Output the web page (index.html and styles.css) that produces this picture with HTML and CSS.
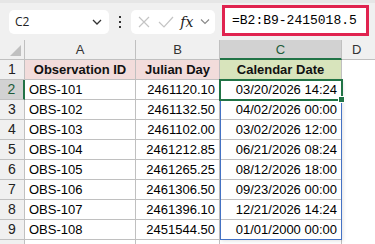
FILE: index.html
```html
<!DOCTYPE html>
<html lang="en">
<head>
    <meta charset="UTF-8">
    <meta name="viewport" content="width=device-width, initial-scale=1.0">
    <title>Julian Day</title>
    <link rel="stylesheet" href="styles.css">
</head>
<body>
    <div class="toolbar">
        <div class="name-box">
            <span>C2</span>
            <svg class="chev" width="12" height="8" viewBox="0 0 12 8"><path d="M2 2 L6 6 L10 2" fill="none" stroke="#333" stroke-width="1.3"/></svg>
        </div>
        <div class="dots"><i></i><i></i><i></i></div>
        <div class="fx-box">
            <svg width="14" height="14" viewBox="0 0 14 14"><path d="M2 2 L12 12 M12 2 L2 12" stroke="#c4c4c4" stroke-width="1.2"/></svg>
            <svg width="16" height="14" viewBox="0 0 16 14"><path d="M1 7 L6 12 L15 2" fill="none" stroke="#c4c4c4" stroke-width="1.2"/></svg>
            <span class="fx">fx</span>
            <svg width="10" height="7" viewBox="0 0 10 7"><path d="M1 1.5 L5 5.5 L9 1.5" fill="none" stroke="#888" stroke-width="1.1"/></svg>
        </div>
        <div class="formula">=B2:B9-2415018.5</div>
    </div>

    <div class="sheet">
        <div class="grid">
            <div class="corner"></div>
            <div class="col-head">A</div>
            <div class="col-head">B</div>
            <div class="col-head sel">C</div>
            <div class="col-head last">D</div>

            <div class="row-head">1</div>
            <div class="cell title pink">Observation ID</div>
            <div class="cell title pink">Julian Day</div>
            <div class="cell title green">Calendar Date</div>
            <div class="cell blank"></div>
        </div>
        <div class="grid" id="rows"></div>

        <div class="range"></div>
        <div class="active"><span class="handle"></span></div>
    </div>

    <script>
        const data = [
            ['OBS-101', '2461120.10', '03/20/2026 14:24'],
            ['OBS-102', '2461132.50', '04/02/2026 00:00'],
            ['OBS-103', '2461102.00', '03/02/2026 12:00'],
            ['OBS-104', '2461212.85', '06/21/2026 08:24'],
            ['OBS-105', '2461265.25', '08/12/2026 18:00'],
            ['OBS-106', '2461306.50', '09/23/2026 00:00'],
            ['OBS-107', '2461396.10', '12/21/2026 14:24'],
            ['OBS-108', '2451544.50', '01/01/2000 00:00']
        ];

        const rows = document.getElementById('rows');
        let html = '';
        data.forEach((r, i) => {
            const n = i + 2;
            html += `<div class="row-head${n === 2 ? ' sel' : ''}">${n}</div>`;
            html += `<div class="cell">${r[0]}</div>`;
            html += `<div class="cell num">${r[1]}</div>`;
            html += `<div class="cell num">${r[2]}</div>`;
            html += `<div class="cell blank"></div>`;
        });
        html += `<div class="row-head"></div><div class="cell"></div><div class="cell"></div><div class="cell"></div><div class="cell blank"></div>`;
        rows.innerHTML = html;
    </script>
</body>
</html>
```

FILE: styles.css
```css
body {
    margin: 0;
    width: 375px;
    height: 244px;
    overflow: hidden;
    background-color: #fff;
    font-family: "Liberation Sans", Arial, sans-serif;
    color: #000;
}
.toolbar {
    height: 40px;
    box-sizing: border-box;
    background-color: #f0f0f0;
    border-top: 3px solid #e6e6e6;
    display: flex;
    align-items: center;
    padding: 0 6px 0 9px;
}
.name-box {
    width: 100px;
    height: 24px;
    box-sizing: border-box;
    background-color: #fff;
    border-radius: 5px;
    display: flex;
    align-items: center;
    justify-content: space-between;
    padding: 0 6px 0 6px;
    font-family: "Open Sans", sans-serif;
    font-size: 12px;
    color: #222;
}
.dots {
    width: 22px;
    display: flex;
    flex-direction: column;
    align-items: center;
    gap: 3px;
}
.dots i {
    width: 2px;
    height: 2px;
    background-color: #333;
}
.fx-box {
    width: 84px;
    height: 24px;
    box-sizing: border-box;
    background-color: #fff;
    border-radius: 5px;
    display: flex;
    align-items: center;
    justify-content: space-between;
    padding: 0 5px 0 6px;
}
.fx {
    font-family: "DejaVu Serif", serif;
    font-style: italic;
    font-size: 14px;
    color: #222;
}
.formula {
    margin-left: 7px;
    flex: 1;
    height: 31px;
    box-sizing: border-box;
    border: 3px solid #e0234f;
    background-color: #fff;
    font-family: "Liberation Mono", monospace;
    font-size: 13px;
    line-height: 25px;
    padding-left: 7px;
    margin-top: -2px;
}
.sheet {
    position: relative;
    height: 204px;
    overflow: hidden;
}
.grid {
    display: grid;
    grid-template-columns: 25px 111px 84px 122px 33px;
    grid-auto-rows: 20px;
}
.grid > div {
    box-sizing: border-box;
    border-right: 1px solid #c0c0c0;
    border-bottom: 1px solid #c0c0c0;
    font-size: 13px;
    line-height: 19px;
    white-space: nowrap;
    overflow: hidden;
}
.corner {
    background-color: #f0f0f0;
    position: relative;
}
.corner::after {
    content: "";
    position: absolute;
    right: 3px;
    bottom: 3px;
    border-left: 11px solid transparent;
    border-bottom: 11px solid #c0c0c0;
}
.col-head {
    background-color: #f0f0f0;
    text-align: center;
    color: #333;
}
.col-head.sel {
    background-color: #d2d2d2;
    border-bottom: 2px solid #217346 !important;
    color: #1e5c3a;
}
.col-head.last {
    text-align: left;
    padding-left: 10px;
    border-right: none !important;
}
.row-head {
    background-color: #f0f0f0;
    text-align: center;
    color: #222;
    font-size: 14px !important;
}
.row-head.sel {
    background-color: #d2d2d2;
    border-right: 2px solid #217346 !important;
    color: #1e5c3a;
}
.cell {
    padding: 0 4px;
}
.cell.num {
    text-align: right;
}
.cell.blank {
    border: none !important;
}
.title {
    font-weight: bold;
    text-align: center;
    color: #111;
}
.pink {
    background-color: #f2dcdb;
}
.green {
    background-color: #d8e4bc;
}
.range {
    position: absolute;
    left: 220px;
    top: 40px;
    width: 122px;
    height: 160px;
    box-sizing: border-box;
    border: 1px solid #4472c4;
    box-shadow: 1px 1px 4px rgba(0, 0, 0, 0.12);
}
.active {
    position: absolute;
    left: 219px;
    top: 39px;
    width: 124px;
    height: 22px;
    box-sizing: border-box;
    border: 2px solid #217346;
}
.handle {
    position: absolute;
    right: -4px;
    bottom: -4px;
    width: 5px;
    height: 5px;
    background-color: #217346;
    border: 1px solid #fff;
}
```
